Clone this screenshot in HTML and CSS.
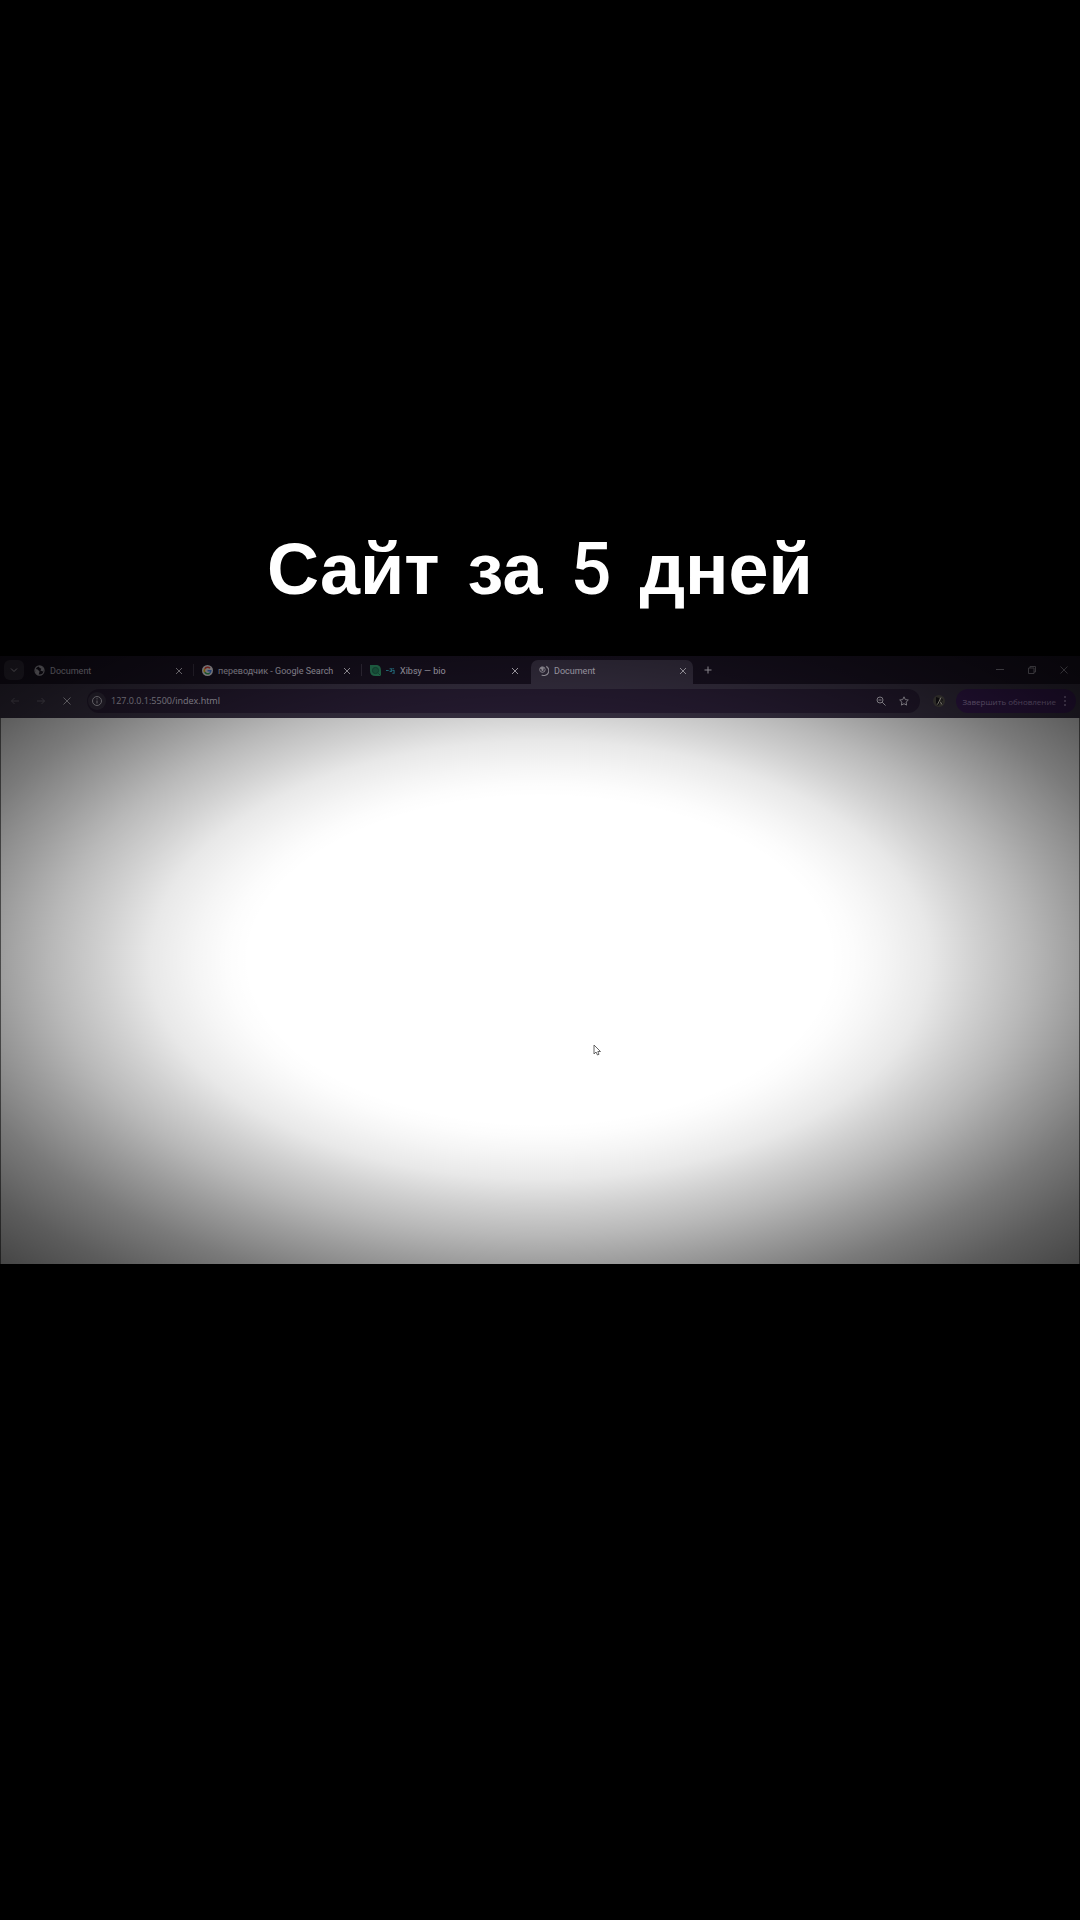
FILE: index.html
```html
<!DOCTYPE html>
<html lang="ru">
<head>
<meta charset="utf-8">
<meta name="viewport" content="width=device-width, initial-scale=1">
<title>Сайт за 5 дней</title>
<link rel="stylesheet" href="styles.css">
</head>
<body>
<main class="stage">
  <h1 class="title"><span>Сайт</span> <span>за</span> <span class="digit">5</span> <span>дней</span></h1>
  <section class="browser">
    <div class="tabstrip">
      <button class="tab-search" aria-label="Поиск вкладок"><svg viewBox="0 0 10 10"><path d="M2 3.5l3 3 3-3"/></svg></button>
      <div class="tabs">
        <div class="tab">
          <svg class="favicon" viewBox="0 0 12 12"><circle cx="6" cy="6" r="5" fill="none" stroke="#cbc6d2" stroke-width="1.2"/><path d="M1 4l3 1 2 2-1 4-3-2zM5 1l1 2 2 1-1 2 3 1 1-3-3-3z" fill="#cbc6d2"/></svg>
          <span class="tab-label">Document</span>
          <button class="icon-button" aria-label="Закрыть"><svg viewBox="0 0 10 10"><path d="M2 2l6 6M8 2l-6 6"/></svg></button>
        </div>
        <div class="tab">
          <svg class="favicon" viewBox="0 0 12 12"><circle cx="6" cy="6" r="6" fill="#f2eef4"/><g fill="none" stroke-width="1.6"><path d="M8.8 3.6A3.6 3.6 0 0 0 3 4.2" stroke="#ea4335"/><path d="M3 4.2a3.6 3.6 0 0 0 0 3.6" stroke="#fbbc05"/><path d="M3 7.8a3.6 3.6 0 0 0 5.4 1" stroke="#34a853"/><path d="M8.4 8.8A3.6 3.6 0 0 0 9.6 6.2H6" stroke="#4285f4"/></g></svg>
          <span class="tab-label">переводчик - Google Search</span>
          <button class="icon-button" aria-label="Закрыть"><svg viewBox="0 0 10 10"><path d="M2 2l6 6M8 2l-6 6"/></svg></button>
        </div>
        <div class="tab">
          <svg class="favicon" viewBox="0 0 12 12"><path d="M0 0h8q4 1 4 6v6H6Q0 12 0 6z" fill="#2f9468"/><circle cx="6" cy="6" r="3.4" fill="#237a58" stroke="#1d5b47"/><path d="M9 9l3 3" stroke="#1d5b47"/></svg>
          <svg class="sparkle" viewBox="0 0 10 10"><path d="M0 5h3M4 3h2v3H4M7 5h2v3H7M7 3h2" fill="none" stroke="#359fb8" stroke-width="1.2"/></svg>
          <span class="tab-label">Xibsy — bio</span>
          <button class="icon-button" aria-label="Закрыть"><svg viewBox="0 0 10 10"><path d="M2 2l6 6M8 2l-6 6"/></svg></button>
        </div>
        <div class="tab tab-active">
          <svg class="favicon" viewBox="0 0 12 12"><g fill="none" stroke="#cbc6d2"><path d="M9 1.5a5.2 5.2 0 0 1-5 9.3" stroke-width="1.3"/><circle cx="4.8" cy="5" r="3"/></g><path d="M2 4l2 1v2l2-1V4l1-1-3-1z" fill="#cbc6d2"/></svg>
          <span class="tab-label">Document</span>
          <button class="icon-button" aria-label="Закрыть"><svg viewBox="0 0 10 10"><path d="M2 2l6 6M8 2l-6 6"/></svg></button>
        </div>
      </div>
      <button class="icon-button new-tab" aria-label="Новая вкладка"><svg viewBox="0 0 10 10"><path d="M5 1.500v7M1.500 5h7"/></svg></button>
      <div class="window-controls">
        <button class="icon-button" aria-label="Свернуть"><svg viewBox="0 0 10 10"><path d="M1 4.500h8"/></svg></button>
        <button class="icon-button" aria-label="Развернуть"><svg viewBox="0 0 10 10"><path d="M1.500 3H7v5.500H1.500zM3 3V1.500h5.500V7H7"/></svg></button>
        <button class="icon-button" aria-label="Закрыть окно"><svg viewBox="0 0 10 10"><path d="M1.500 1.500l7 7M8.500 1.500l-7 7"/></svg></button>
      </div>
    </div>
    <div class="toolbar">
      <nav class="nav">
        <button class="icon-button" disabled aria-label="Назад"><svg viewBox="0 0 10 10"><path d="M9 5H1.500M4.500 2l-3 3 3 3"/></svg></button>
        <button class="icon-button" disabled aria-label="Вперёд"><svg viewBox="0 0 10 10"><path d="M1 5h7.500M5.500 2l3 3-3 3"/></svg></button>
        <button class="icon-button" aria-label="Остановить"><svg viewBox="0 0 10 10"><path d="M1.500 1.500l7 7M8.500 1.500l-7 7"/></svg></button>
      </nav>
      <div class="omnibox">
        <button class="site-info" aria-label="О сайте"><svg viewBox="0 0 12 12"><circle cx="6" cy="6" r="4.500"/><path d="M6 5.500v3M6 3.200v1.200"/></svg></button>
        <input class="address" type="text" value="127.0.0.1:5500/index.html" aria-label="Адресная строка">
        <button class="icon-button" aria-label="Масштаб"><svg viewBox="0 0 10 10"><circle cx="4" cy="4" r="3"/><path d="M6.200 6.200L9.500 9.500M2.500 4h3"/></svg></button>
        <button class="icon-button" aria-label="Добавить в закладки"><svg viewBox="0 0 10 10"><path d="M5 .8l1.300 2.800 3 .4-2.200 2.100.5 3L5 7.700 2.400 9.100l.5-3L.7 4l3-.4z"/></svg></button>
      </div>
      <button class="profile" aria-label="Профиль"><svg viewBox="0 0 12 12"><circle cx="6" cy="6" r="6" fill="#5a5750" stroke="none"/><path d="M3 2l3 1 1 5-2 3-2-3zM8 3l2 2-2 2 2 3" fill="#17151a" stroke="none"/><path d="M8 2.500L4.500 9.500M7.500 7l1.500 2.500" stroke="#eee8d8"/></svg></button>
      <button class="update"><span>Завершить обновление</span><svg viewBox="0 0 4 12"><circle cx="2" cy="2" r="1"/><circle cx="2" cy="6" r="1"/><circle cx="2" cy="10" r="1"/></svg></button>
    </div>
    <div class="page">
      <svg class="cursor" viewBox="0 0 8 12"><path d="M1 1v9l2-2 1.500 3 1.500-.7L4.800 7.500H7.500z" fill="#fff" stroke="#555" stroke-width=".9"/></svg>
    </div>
  </section>
</main>
</body>
</html>
```
FILE: styles.css
```css
* { box-sizing: border-box; }

body {
  margin: 0;
  background: #000;
  font-family: "Open Sans", "Noto Sans", sans-serif;
}

.stage {
  min-height: 100vh;
  display: grid;
  grid-template-columns: minmax(0, 1fr);
  grid-template-rows: 1fr auto 1fr;
}

.title {
  display: flex;
  justify-content: center;
  align-items: baseline;
  align-self: end;
  gap: 28px;
  margin: 0 0 42px;
  color: #fff;
  font: bold 72px/88px "Liberation Sans", sans-serif;
}

.digit {
  font-family: Roboto, sans-serif;
  font-weight: 500;
}

.browser {
  position: relative;
  display: flex;
  flex-direction: column;
  aspect-ratio: 16 / 9;
  background: #1c1426;
  color: #ddd8e4;
}

/* vignette over the whole window */
.browser::after {
  content: "";
  position: absolute;
  inset: 0;
  pointer-events: none;
  background: radial-gradient(ellipse farthest-corner at center,
    rgba(0, 0, 0, 0) 38%,
    rgba(0, 0, 0, .01) 41%,
    rgba(0, 0, 0, .04) 45%,
    rgba(0, 0, 0, .09) 51%,
    rgba(0, 0, 0, .18) 57%,
    rgba(0, 0, 0, .28) 64%,
    rgba(0, 0, 0, .39) 71%,
    rgba(0, 0, 0, .52) 80%,
    rgba(0, 0, 0, .64) 90%,
    rgba(0, 0, 0, .73) 100%);
}

button {
  padding: 0;
  border: 0;
  background: none;
  color: inherit;
  font: inherit;
}

svg { display: block; }

button svg {
  width: 100%;
  height: 100%;
  fill: none;
  stroke: currentColor;
}

.icon-button {
  flex: none;
  width: 10px;
  height: 10px;
}

.icon-button:disabled { opacity: .4; }

.tabstrip {
  display: flex;
  align-items: center;
  height: 28px;
  padding: 0 11px 0 4px;
}

.tab-search {
  width: 20px;
  height: 20px;
  margin-right: 3px;
  padding: 5px;
  border-radius: 6px;
  background: #3a3344;
}

.tabs {
  display: flex;
  align-self: stretch;
  gap: 6px;
  min-width: 0;
  padding-top: 4px;
}

.tab {
  position: relative;
  display: flex;
  align-items: center;
  flex: 0 1 162px;
  gap: 5px;
  width: 162px;
  min-width: 0;
  padding: 0 5px 3px 7px;
  font-family: Roboto, "Noto Sans", sans-serif;
  font-size: 9px;
  line-height: 12px;
}

.tab:nth-child(-n+2)::after {
  content: "";
  position: absolute;
  right: -5px;
  top: 4px;
  width: 1px;
  height: 12px;
  background: #40384a;
}

.tab-active {
  border-radius: 7px 7px 0 0;
  background: #3e364a;
}

.favicon {
  flex: none;
  width: 11px;
  height: 11px;
}

.sparkle {
  flex: none;
  width: 9px;
  height: 9px;
}

.tab-label {
  flex: 1;
  white-space: nowrap;
}

.new-tab { margin-left: 10px; }

.window-controls {
  display: flex;
  gap: 22px;
  margin-left: auto;
  opacity: .7;
}

.toolbar {
  display: flex;
  align-items: center;
  height: 34px;
  padding: 0 4px 0 10px;
  background: #3e364a;
}

.nav {
  display: flex;
  gap: 16px;
  margin-right: 15px;
}

.omnibox {
  display: flex;
  align-items: center;
  flex: 1;
  gap: 13px;
  height: 24px;
  min-width: 0;
  padding: 0 11px 0 1px;
  border-radius: 12px;
  background: #2b1f38;
}

.site-info {
  flex: none;
  width: 18px;
  height: 18px;
  padding: 3px;
  border-radius: 9px;
  background: #3e364a;
}

.address {
  flex: 1;
  min-width: 0;
  height: 16px;
  margin-left: -8px;
  padding: 0;
  border: 0;
  outline: 0;
  background: none;
  color: inherit;
  font: 9px/16px "Open Sans", "Noto Sans", sans-serif;
}

.profile {
  width: 12px;
  height: 12px;
  margin: 0 11px 0 13px;
}

.update {
  display: flex;
  align-items: center;
  gap: 7px;
  height: 24px;
  padding: 0 9px 0 6px;
  border-radius: 12px;
  background: #3b1c58;
  color: #b89cd0;
  font-size: 8px;
  white-space: nowrap;
}

.update svg {
  width: 4px;
  height: 12px;
  fill: currentColor;
  stroke: none;
}

.page {
  position: relative;
  flex: 1;
  border: solid #777;
  border-width: 0 1px;
  background: #fff;
}

.cursor {
  position: absolute;
  left: 55%;
  top: 60%;
  width: 8px;
  height: 12px;
  margin: -2px 0 0 -1px;
}
```
